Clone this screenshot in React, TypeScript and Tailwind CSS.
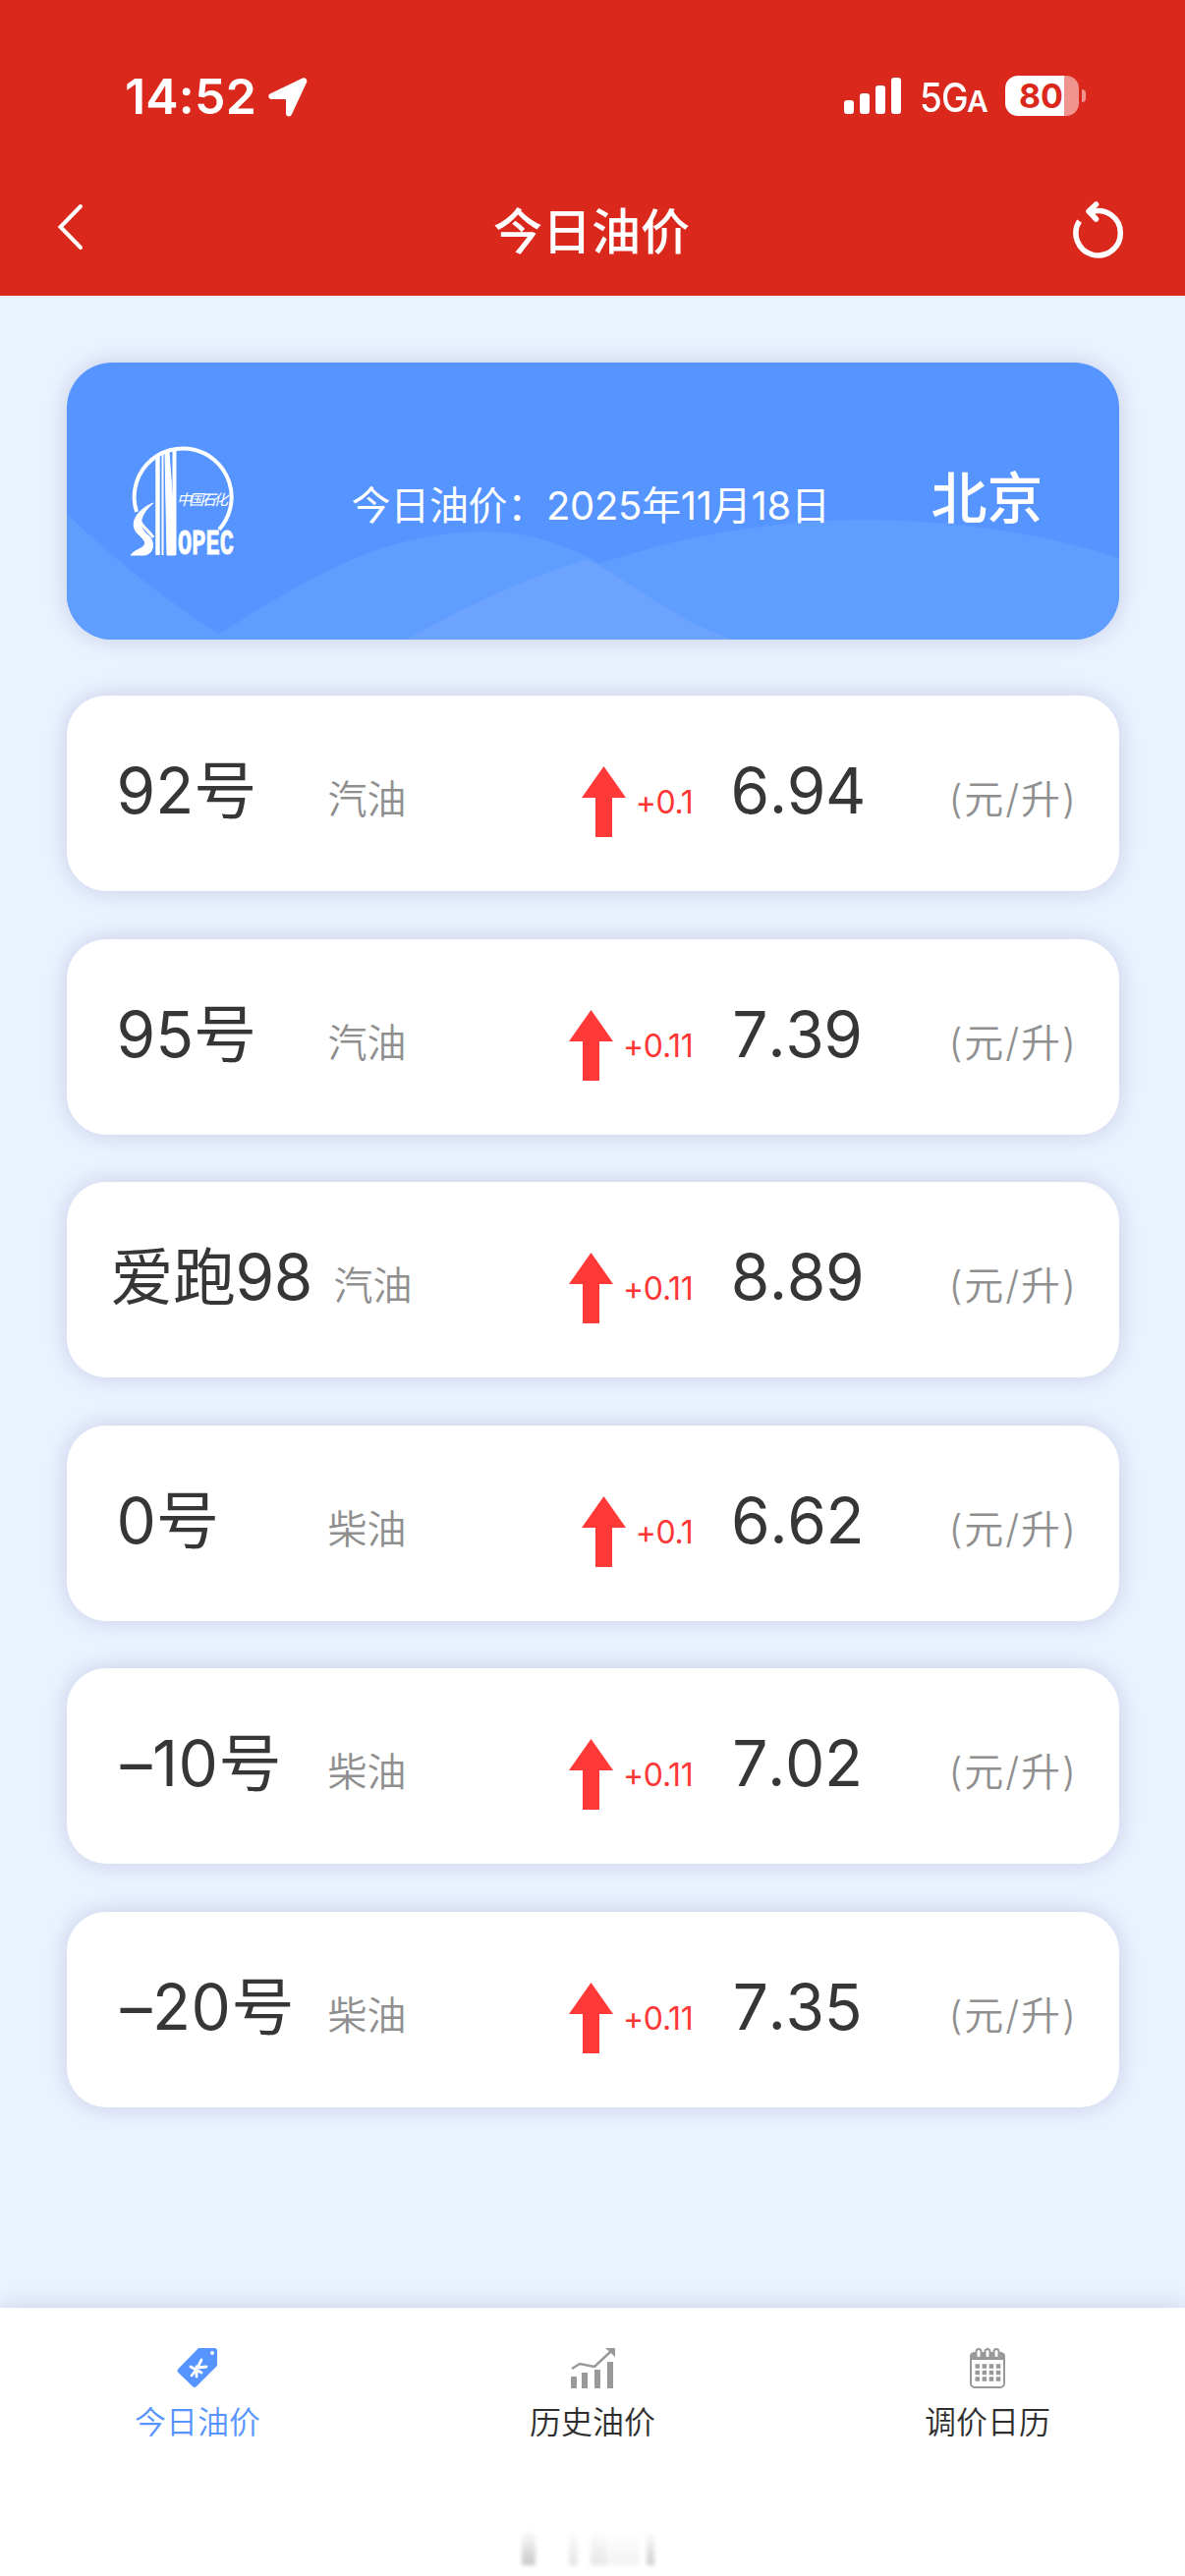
import type { ReactNode } from 'react'

type Row = {
  name: string
  kind: string
  delta: string
  price: string
  nameClass: string
}

const ROWS: Row[] = [
  { name: '92号', kind: '汽油', delta: '+0.1', price: '6.94', nameClass: 'ml-[51px] w-[215px]' },
  { name: '95号', kind: '汽油', delta: '+0.11', price: '7.39', nameClass: 'ml-[51px] w-[215px]' },
  { name: '爱跑98', kind: '汽油', delta: '+0.11', price: '8.89', nameClass: 'ml-[45px] w-[227px] tracking-[-0.500px]' },
  { name: '0号', kind: '柴油', delta: '+0.1', price: '6.62', nameClass: 'ml-[51px] w-[215px]' },
  { name: '–10号', kind: '柴油', delta: '+0.11', price: '7.02', nameClass: 'ml-[55px] w-[211px] tracking-[0.500px]' },
  { name: '–20号', kind: '柴油', delta: '+0.11', price: '7.35', nameClass: 'ml-[55px] w-[211px] tracking-[0.500px]' },
]

function StatusBar() {
  return (
    <div className="flex h-[160px] items-start pt-[72px] pl-[127px] text-white">
      <span className="w-[146px] text-[50px] leading-[52px] font-semibold tracking-[0.200px]">14:52</span>
      <svg className="mt-[7px] h-[40px] w-[40px]" viewBox="0 0 40 40" fill="currentColor">
        <path d="M35 .6 2.200 16.200C-.9 17.700 0 22 3.400 22H17a1 1 0 0 1 1 1v13.200c0 3.600 4.400 4.500 5.900 1.300L39 5C40.300 2.100 37.800-.7 35 .6Z" />
      </svg>
      <div className="mt-[7px] ml-[546px] flex h-[37px] items-end gap-[6px]">
        <i className="h-[14px] w-[10px] rounded-[3px] bg-white" />
        <i className="h-[21px] w-[10px] rounded-[3px] bg-white" />
        <i className="h-[29px] w-[10px] rounded-[3px] bg-white" />
        <i className="h-[37px] w-[10px] rounded-[3px] bg-white" />
      </div>
      <div className="ml-[19px] flex w-[87px] items-baseline pt-[1px] leading-[52px]">
        <span className="inline-block w-[48px] origin-left scale-x-90 text-[41px] font-medium tracking-[-1px]">5G</span>
        <span className="inline-block origin-left text-[30px] font-semibold">A</span>
      </div>
      <div className="mt-[5px] flex h-[41px] w-[75px] items-center justify-center overflow-hidden rounded-[13px] bg-linear-to-r from-white from-80% to-[#f09490] to-80% pr-[2px] text-[34px] font-bold text-[#da281c]">
        80
      </div>
      <i className="mt-[19px] ml-[3px] h-[13px] w-[4px] rounded-r-full bg-[#f09490]" />
    </div>
  )
}

function NavBar() {
  return (
    <div className="flex h-[141px] items-start justify-between pr-[61px] pl-[57px] text-white">
      <svg className="mt-[46px] h-[50px] w-[30px]" viewBox="0 0 30 50" fill="none" stroke="currentColor" strokeWidth="4" strokeLinecap="round">
        <path d="M25 4 4.500 25 25 46" />
      </svg>
      <h1 className="mt-[45px] ml-[28px] text-[50px] leading-[62px] font-medium">今日油价</h1>
      <svg className="mt-[43px] h-[62px] w-[56px]" viewBox="0 0 56 62" fill="none" stroke="currentColor" strokeWidth="5.500" strokeLinecap="round" strokeLinejoin="round">
        <path d="M9.500 22A22.700 22.700 0 1 0 22 12.500" strokeLinecap="butt" />
        <path d="m26.500 5-7.500 7 7.500 8" />
      </svg>
    </div>
  )
}

function SinopecLogo() {
  return (
    <svg className="mt-[86px] h-[110px] w-[106px] overflow-visible" viewBox="0 0 106 110" fill="none" stroke="white">
      <path d="M6 66A49.500 49.500 0 1 1 90 84" strokeWidth="4" />
      {/* 左侧立柱和 N */}
      <path d="M27.500 9v101" strokeWidth="4.500" />
      <path d="M32.500 6v104" strokeWidth="2" />
      <path d="M35 5h4l6 80v25h-8L36 60Z" fill="white" strokeWidth="1" />
      <path d="M44.500 3v107" strokeWidth="4" />
      {/* S 形曲线 */}
      <path d="M23 57C8 63-3 77 7 88c6 6 10 9 6 13-3 3-9 4-13 9h14c10-1 11-14 4-20C7 82 8 70 23 57Z" fill="white" strokeWidth="1" />
      <path d="M9 73c1 8 8 10 14 19" strokeWidth="3" />
      <text x="47" y="59" fill="white" stroke="none" fontSize="15" fontStyle="italic" textLength="52" fontFamily="Noto Sans CJK SC, sans-serif">
        中国石化
      </text>
      <text x="48" y="109" fill="white" stroke="white" strokeWidth=".8" fontSize="37" fontWeight="700" textLength="57" lengthAdjust="spacingAndGlyphs" fontFamily="Liberation Mono, monospace">
        OPEC
      </text>
    </svg>
  )
}

function Banner() {
  return (
    <section className="relative flex h-[282px] overflow-hidden rounded-[46px] bg-[#5694ff] pl-[65px] text-white">
      <svg className="absolute inset-0 h-full w-full" viewBox="0 0 1071 282" preserveAspectRatio="none">
        <path d="M0 154C50 202 105 246 164 282H0Z" fill="#5f9dff" />
        <path d="M145 282C245 220 320 172 425 172S590 245 678 282Z" fill="#5f9dff" />
        <path d="M345 282C480 225 620 160 815 160Q960 162 1071 199V282Z" fill="#5f9dff" />
        <path d="M345 282C410 246 465 220 530 200C585 230 622 264 678 282Z" fill="#6ba3ff" />
      </svg>
      <div className="relative flex w-full items-start">
        <SinopecLogo />
        <p className="mt-[118px] ml-[119px] w-[590px] text-[40px] leading-[56px] font-normal tracking-[-0.300px] whitespace-nowrap">
          今日油价：2025年11月18日
        </p>
        <p className="mt-[105px] text-[57px] leading-[68px] font-medium">北京</p>
      </div>
    </section>
  )
}

function PriceCard({ row }: { row: Row }) {
  return (
    <li className="flex h-[199px] items-baseline rounded-[40px] bg-white pt-[48px] leading-none whitespace-nowrap text-[#363636] shadow-[0_0_24px_rgba(50,65,125,0.2)]">
      <span className={`text-[64px] leading-[52px] font-normal ${row.nameClass}`}>{row.name}</span>
      <span className="w-[150px] text-[40px] font-[350] text-[#8f8f8f]">{row.kind}</span>
      <span className="ml-auto flex items-baseline text-[32px] font-normal tracking-[-0.300px] text-[#ff3636]">
        <svg className="mr-[10px] h-[72px] w-[45px] translate-y-[24px]" viewBox="0 0 45 72" fill="#ff3838">
          <path d="M22.500 0 45 32H31v40H14V32H0Z" />
        </svg>
        {row.delta}
      </span>
      <span className="ml-[38px] w-[136px] text-center text-[64px] leading-[52px] font-normal tracking-[-0.400px] [font-kerning:none]">{row.price}</span>
      <span className="mr-[44px] ml-[86px] w-[129px] text-[40px] font-[350] tracking-[1.900px] text-[#8f8f8f]">(元/升)</span>
    </li>
  )
}

function TagIcon() {
  return (
    <svg className="h-[41px] w-[42px]" viewBox="0 0 42 41">
      <path d="M22 0h16q3 0 3 3v15L20 39q-2 2-4 0L1.500 25q-2-2 0-4Z" fill="#5694ff" />
      <circle cx="36" cy="5" r="2" fill="white" />
      <path d="m21 20 4-8M21 20l9-1M14 19l11 6M15 28l7-9M20 29V19" stroke="white" strokeWidth="2.800" strokeLinecap="round" />
    </svg>
  )
}

function ChartIcon() {
  return (
    <svg className="h-[41px] w-[46px]" viewBox="0 0 46 41" fill="#999">
      <path d="M1 29h6v12H1ZM12 25h6v16h-6ZM25 22h6v19h-6ZM38 14h6v27h-6Z" />
      <path d="M2 21 10 16l15 3L41 4" fill="none" stroke="#999" strokeWidth="2.500" />
      <path d="m36 0h10v9Z" />
    </svg>
  )
}

function CalendarIcon() {
  return (
    <svg className="h-[41px] w-[38px]" viewBox="0 0 38 41" fill="none" stroke="#999" strokeWidth="2">
      <rect x="2" y="6" width="34" height="34" rx="4" />
      <path d="M2 11V8q0-2 3-3h28q3 1 3 3v3Z" fill="#999" />
      <rect x="7.500" y="1" width="5" height="9" rx="2.500" fill="white" />
      <rect x="16.500" y="1" width="5" height="9" rx="2.500" fill="white" />
      <rect x="25.500" y="1" width="5" height="9" rx="2.500" fill="white" />
      <path d="M6.500 18.500h26M6.500 25h26M6.500 31.500h26" strokeWidth="4.500" strokeDasharray="4.500 2.600" />
    </svg>
  )
}

function Tab({ icon, label, active }: { icon: ReactNode; label: string; active?: boolean }) {
  return (
    <div className={`flex flex-1 flex-col items-center ${active ? 'text-[#5694ff]' : 'text-[#2e2e2e]'}`}>
      {icon}
      <span className="mt-[15px] text-[32px] leading-[40px] font-[350]">{label}</span>
    </div>
  )
}

export default function App() {
  return (
    <div className="flex h-[2622px] w-[1206px] flex-col overflow-hidden bg-[#ebf2ff] font-[Inter,'Noto_Sans_CJK_SC',sans-serif]">
      <header className="h-[301px] shrink-0 bg-[#da281c]">
        <StatusBar />
        <NavBar />
      </header>

      <main className="flex-1 px-[67.500px] pt-[68px]">
        <div className="rounded-[46px] shadow-[0_0_24px_rgba(50,65,125,0.2)]">
          <Banner />
        </div>
        <ul className="mt-[57px] flex flex-col gap-[48.600px]">
          {ROWS.map((row) => (
            <PriceCard key={row.name} row={row} />
          ))}
        </ul>
      </main>

      <footer className="flex h-[273px] shrink-0 flex-col justify-between bg-white shadow-[0_0_24px_rgba(50,65,125,0.2)]">
        <nav className="flex pt-[41px]">
          <Tab icon={<TagIcon />} label="今日油价" active />
          <Tab icon={<ChartIcon />} label="历史油价" />
          <Tab icon={<CalendarIcon />} label="调价日历" />
        </nav>
        <div className="mb-[11px] ml-[531px] flex h-[36px] items-stretch blur-[2px]">
          <i className="w-[14px] bg-linear-to-b from-white to-[#c8c8c8]" />
          <i className="ml-[34px] w-[9px] bg-linear-to-b from-white to-[#e4e4e4]" />
          <i className="ml-[13px] w-[16px] bg-linear-to-b from-white to-[#e6e6e6]" />
          <i className="w-[34px] bg-linear-to-b from-white to-[#f3f3f3]" />
          <i className="ml-[7px] w-[8px] bg-linear-to-b from-white to-[#cfcfcf]" />
        </div>
      </footer>
    </div>
  )
}
